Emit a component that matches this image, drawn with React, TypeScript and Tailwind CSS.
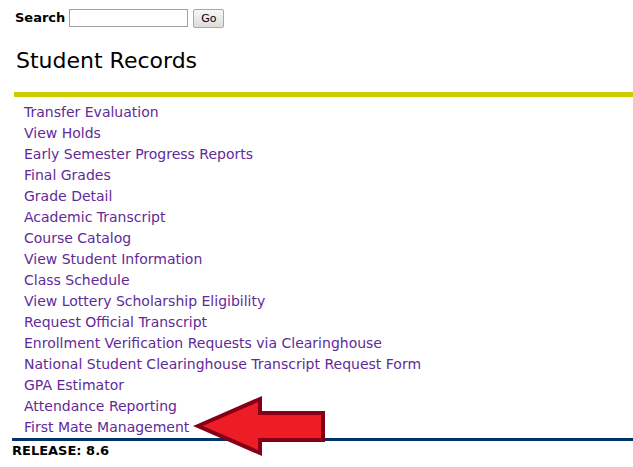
export default function App() {
  const links = [
    "Transfer Evaluation",
    "View Holds",
    "Early Semester Progress Reports",
    "Final Grades",
    "Grade Detail",
    "Academic Transcript",
    "Course Catalog",
    "View Student Information",
    "Class Schedule",
    "View Lottery Scholarship Eligibility",
    "Request Official Transcript",
    "Enrollment Verification Requests via Clearinghouse",
    "National Student Clearinghouse Transcript Request Form",
    "GPA Estimator",
    "Attendance Reporting",
    "First Mate Management",
  ]

  return (
    <div className="relative w-[633px] h-[467px] overflow-hidden bg-white text-black font-['DejaVu_Sans',Verdana,sans-serif]">
      {/* Search */}
      <div className="flex items-center pl-[15px] pt-[9px] h-[27px]">
        <span className="text-[13px] font-bold mr-[4px]">Search</span>
        <input type="text" className="w-[119px] h-[18px] border border-[#a0a0a0] bg-white" />
        <button className="ml-[5px] w-[31px] h-[19px] border border-[#a8a8a8] rounded-[2px] bg-gradient-to-b from-[#f6f6f6] to-[#dddddd] text-[11px] leading-none">
          Go
        </button>
      </div>

      {/* Title */}
      <h1 className="pl-[16px] mt-[20px] text-[22px] leading-[28px] font-normal">Student Records</h1>

      {/* Menu */}
      <div className="ml-[14px] mt-[17px] border-t-[5px] border-[#cccc00]">
        <ul className="pl-[10px] pt-[5px]">
          {links.map((l) => (
            <li key={l} className="h-[21px] leading-[21px] text-[14px]">
              <a href="#" className="text-[#612a98]">{l}</a>
            </li>
          ))}
        </ul>
      </div>
      <div className="ml-[12px] border-t-[3px] border-[#003366]">
        <p className="pt-[1px] text-[13px] font-bold leading-[18px]">RELEASE: 8.6</p>
      </div>

      {/* Arrow overlay */}
      <svg className="absolute left-0 top-0" width="633" height="467" viewBox="0 0 633 467">
        <polygon
          points="198,426 260,399 260,413 323,413 323,440 260,440 260,453"
          fill="#ee1c25"
          stroke="#850016"
          strokeWidth="4"
          strokeLinejoin="miter"
        />
      </svg>
    </div>
  )
}
